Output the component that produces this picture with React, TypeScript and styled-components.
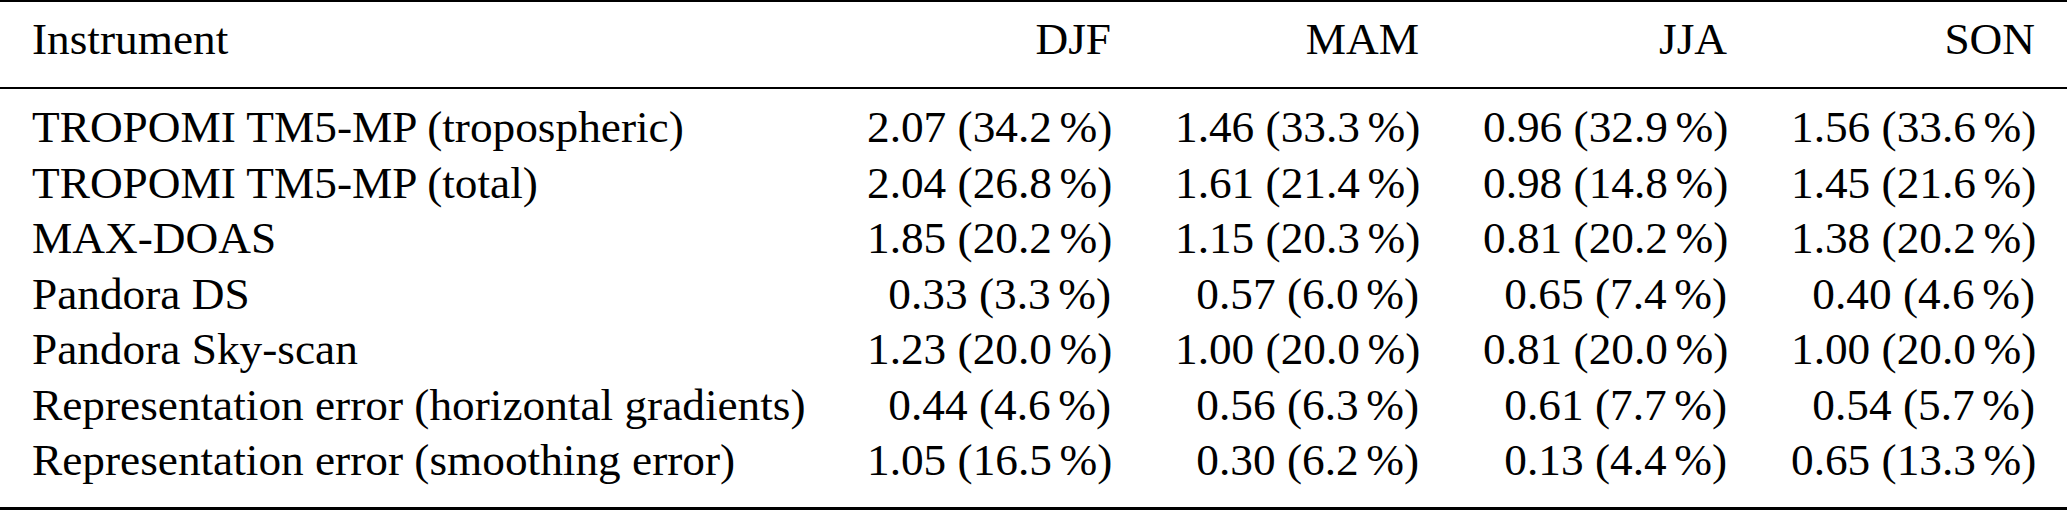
import React from "react";
import styled, { createGlobalStyle } from "styled-components";

type Cell = [string, string];
type Row = { name: string; values: Cell[] };

const seasons = ["DJF", "MAM", "JJA", "SON"];

const rows: Row[] = [
  {
    name: "TROPOMI TM5-MP (tropospheric)",
    values: [["2.07", "34.2"], ["1.46", "33.3"], ["0.96", "32.9"], ["1.56", "33.6"]],
  },
  {
    name: "TROPOMI TM5-MP (total)",
    values: [["2.04", "26.8"], ["1.61", "21.4"], ["0.98", "14.8"], ["1.45", "21.6"]],
  },
  {
    name: "MAX-DOAS",
    values: [["1.85", "20.2"], ["1.15", "20.3"], ["0.81", "20.2"], ["1.38", "20.2"]],
  },
  {
    name: "Pandora DS",
    values: [["0.33", "3.3"], ["0.57", "6.0"], ["0.65", "7.4"], ["0.40", "4.6"]],
  },
  {
    name: "Pandora Sky-scan",
    values: [["1.23", "20.0"], ["1.00", "20.0"], ["0.81", "20.0"], ["1.00", "20.0"]],
  },
  {
    name: "Representation error (horizontal gradients)",
    values: [["0.44", "4.6"], ["0.56", "6.3"], ["0.61", "7.7"], ["0.54", "5.7"]],
  },
  {
    name: "Representation error (smoothing error)",
    values: [["1.05", "16.5"], ["0.30", "6.2"], ["0.13", "4.4"], ["0.65", "13.3"]],
  },
];

const ErrorTable = () => {
  return (
    <>
      <GlobalStyle />
      <Table>
        <thead>
          <tr>
            <HeadCell>Instrument</HeadCell>
            {seasons.map((s) => (
              <HeadCell key={s} $numeric>
                {s}
              </HeadCell>
            ))}
          </tr>
        </thead>
        <tbody>
          {rows.map((row) => (
            <BodyRow key={row.name}>
              <BodyCell>{row.name}</BodyCell>
              {row.values.map(([abs, rel], i) => (
                <BodyCell key={i} $numeric>
                  {abs} ({rel}
                  <Pct>%</Pct>)
                </BodyCell>
              ))}
            </BodyRow>
          ))}
        </tbody>
      </Table>
    </>
  );
};

const GlobalStyle = createGlobalStyle`
  html, body {
    margin: 0;
    padding: 0;
    background: #ffffff;
    overflow: hidden;
  }
`;

const Table = styled.table`
  width: 100%;
  table-layout: fixed;
  border-collapse: separate;
  border-spacing: 0;
  font-family: "Liberation Serif", "Times New Roman", serif;
  font-size: 45.3px;
  line-height: 55.5px;
  color: #000000;
`;

const HeadCell = styled.th<{ $numeric?: boolean }>`
  font-weight: 400;
  text-align: ${(p) => (p.$numeric ? "right" : "left")};
  width: ${(p) => (p.$numeric ? "244px" : "auto")};
  padding: 10px 32px 19.5px;
  border-top: 2px solid #000000;
  border-bottom: 2px solid #000000;
  white-space: nowrap;
`;

const BodyRow = styled.tr`
  &:first-child td {
    padding-top: 11px;
  }
  &:last-child td {
    padding-bottom: 18.5px;
    border-bottom: 3px solid #000000;
  }
`;

const BodyCell = styled.td<{ $numeric?: boolean }>`
  text-align: ${(p) => (p.$numeric ? "right" : "left")};
  padding: 0 32px;
  white-space: nowrap;
`;

const Pct = styled.span`
  margin-left: 0.167em;
`;

export default ErrorTable;
